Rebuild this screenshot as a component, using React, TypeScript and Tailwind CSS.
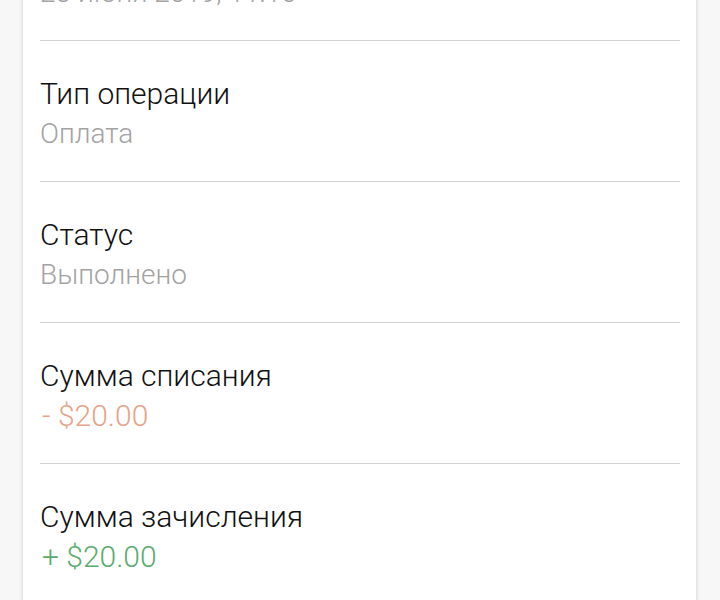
const rows = [
  { label: 'Дата', value: '23 июня 2019, 11:16', tone: 'text-[28px] text-[#a3a3a3]' },
  { label: 'Тип операции', value: 'Оплата', tone: 'text-[28px] text-[#a3a3a3]' },
  { label: 'Статус', value: 'Выполнено', tone: 'text-[28px] text-[#a3a3a3]' },
  { label: 'Сумма списания', value: '- $20.00', tone: 'text-[30px] pl-[2px] text-[#e6a48a]' },
  { label: 'Сумма зачисления', value: '+ $20.00', tone: 'text-[30px] pl-[2px] text-[#5aab6c]' },
]

function DetailRow({ label, value, tone }: { label: string; value: string; tone: string }) {
  return (
    <div className="pt-[32px] pb-[27px] border-b border-[#d0d0d0]">
      <div className="text-[30px] leading-[41px] font-light text-[#111111]">{label}</div>
      <div className={`leading-[40px] font-light ${tone}`}>{value}</div>
    </div>
  )
}

export default function App() {
  return (
    <div
      className="h-[600px] overflow-hidden bg-[#f7f7f7]"
      style={{ fontFamily: 'Roboto, "Noto Sans", sans-serif' }}
    >
      <div className="ml-[23px] w-[673px] -mt-[100px] bg-white pl-[17px] pr-[16px] shadow-[0_0_4px_rgba(0,0,0,0.18)]">
        {rows.map((r) => (
          <DetailRow key={r.label} {...r} />
        ))}
      </div>
    </div>
  )
}
